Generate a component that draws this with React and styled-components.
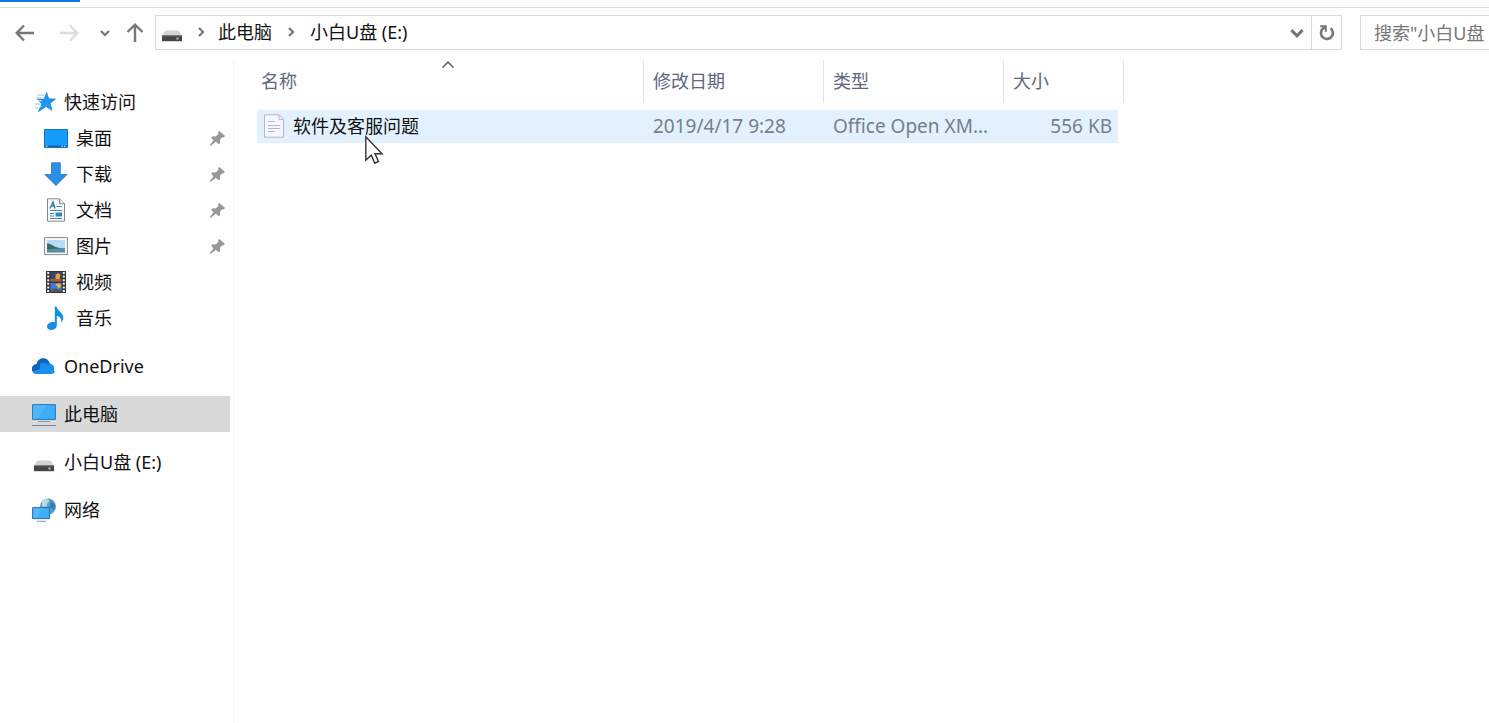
import React from "react";
import styled, { createGlobalStyle } from "styled-components";

const GlobalStyle = createGlobalStyle`
  * {
    box-sizing: border-box;
  }

  body {
    margin: 0;
    background: #fefefe;
    color: #111111;
    font-family: "Noto Sans", "Noto Sans CJK SC", sans-serif;
    font-size: 18px;
    line-height: 24px;
  }

  svg {
    display: block;
    flex-shrink: 0;
  }
`;

const Window = styled.div`
  display: flex;
  flex-direction: column;
  min-height: 100vh;
  overflow: hidden;
`;

const TabStrip = styled.div`
  height: 8px;
  border-bottom: 1px solid #dcdcdc;
`;

const ActiveTab = styled.div`
  width: 80px;
  height: 2px;
  background: #0f78e6;
`;

const Toolbar = styled.div`
  display: flex;
  align-items: center;
  padding: 7px 0 10px 12px;
`;

const History = styled.div`
  display: flex;
  gap: 10px;
`;

const IconButton = styled.button`
  display: flex;
  align-items: center;
  justify-content: center;
  width: ${(props) => props.$width}px;
  height: 33px;
  padding: 0;
  border: 0;
  border-left: ${(props) => (props.$divided ? "1px solid #d9d9d9" : "0")};
  background: none;
  color: ${(props) => (props.disabled ? "#dcdcdc" : "#777777")};
`;

const AddressBar = styled.div`
  display: flex;
  flex: 1;
  align-items: center;
  height: 35px;
  margin: 0 18px 0 5px;
  padding-left: 4px;
  border: 1px solid #d9d9d9;
`;

const Breadcrumb = styled.div`
  display: flex;
  flex: 1;
  align-items: center;
  padding-bottom: 2px;
  color: #777777;
`;

const Crumb = styled.a`
  color: #111111;
  text-decoration: none;
  white-space: nowrap;
`;

const CrumbArrow = styled.span`
  display: flex;
  justify-content: center;
  width: ${(props) => (props.$wide ? 38 : 34)}px;
`;

const Search = styled.input`
  width: 129px;
  height: 35px;
  padding: 0 0 0 13px;
  border: 1px solid #d9d9d9;
  border-right: 0;
  background: none;
  font: inherit;

  &::placeholder {
    color: #777777;
    opacity: 1;
  }
`;

const Main = styled.div`
  display: flex;
  flex: 1;
`;

const Sidebar = styled.nav`
  width: 234px;
  padding: 24px 3px 0 0;
  border-right: 1px solid #f5f5f5;
`;

const Group = styled.div`
  margin-bottom: 12px;
`;

const Item = styled.a`
  display: flex;
  align-items: center;
  gap: 8px;
  height: 36px;
  padding: 0 4px 0 ${(props) => (props.$nested ? 44 : 32)}px;
  background: ${(props) => (props.$selected ? "#d9d9d9" : "none")};
  color: #111111;
  text-decoration: none;
`;

const ItemName = styled.span`
  flex: 1;
`;

const Content = styled.main`
  flex: 1;
  padding-left: 23px;
`;

const Table = styled.table`
  width: 867px;
  table-layout: fixed;
  border-spacing: 0;
`;

const HeadCell = styled.th`
  position: relative;
  width: ${(props) => props.$width}px;
  height: 43px;
  padding: 0 0 2px ${(props) => (props.$first ? 4 : 9)}px;
  border-right: 1px solid #e4e4e4;
  color: #5d6880;
  font-weight: normal;
  text-align: left;
`;

const SortArrow = styled.span`
  position: absolute;
  top: -2px;
  right: 188px;
`;

const Spacer = styled.tr`
  height: 7px;
`;

const Cell = styled.td`
  height: 33px;
  padding: 0 8px 2px 9px;
  background: #e3f1fe;
  color: #757f8a;
  font-size: 19px;
  overflow: hidden;
  white-space: nowrap;
`;

const NameCell = styled(Cell)`
  padding-left: 5px;
  color: #111111;
  font-size: 18px;
`;

const SizeCell = styled(Cell)`
  padding-right: 6px;
  border-right: 6px solid #fefefe;
  text-align: right;
`;

const FileName = styled.div`
  display: flex;
  align-items: center;
  gap: 7px;
`;

const Pointer = styled.div`
  position: absolute;
  top: 135px;
  left: 364px;
  pointer-events: none;
`;

function Arrow({ rotate = 0 }) {
  return (
    <svg width="24" height="24" viewBox="0 0 24 24" fill="none" stroke="currentColor" strokeWidth="2.4">
      <path d="M21 12H4M11 4.5 3.7 12l7.3 7.5" transform={`rotate(${rotate} 12 12)`} />
    </svg>
  );
}

function Chevron({ size = 10, rotate = 0, weight = 2.2 }) {
  return (
    <svg width={size} height={size} viewBox="0 0 10 10" fill="none" stroke="currentColor" strokeWidth={weight}>
      <path d="M1 3l4 4 4-4" transform={`rotate(${rotate} 5 5)`} />
    </svg>
  );
}

function Refresh() {
  return (
    <svg width="18" height="18" viewBox="0 0 18 18" fill="none" stroke="currentColor" strokeWidth="2.6">
      <path d="M12.6 4.2A6 6 0 1 1 4 5.5L7 3" />
      <path d="M2.2 2.2h5.6v5.6" strokeWidth="2" />
    </svg>
  );
}

function DriveIcon() {
  return (
    <svg width="24" height="24" viewBox="0 0 24 24">
      <path d="M5.5 10.5h13l3.5 5H2z" fill="#d3d3d3" />
      <path d="M2 15h20v6.2H2z" fill="#454545" />
      <path d="M2 15h20v1.2H2z" fill="#7d7d7d" />
      <path d="M16.5 17.5h2v2h-2z" fill="#8fe6a0" />
    </svg>
  );
}

function StarIcon() {
  return (
    <svg width="24" height="24" viewBox="0 0 24 24">
      <path
        d="M14.6 2.5l2.2 6.3 6.6.3-5.2 4.3 1.8 6.9-5.9-3.7-7.6 5 3.2-7.8L5.4 9.2l6.9-.2z"
        fill="#2196ee"
        stroke="#1b7bc9"
        strokeWidth=".7"
      />
      <path d="M5.5 5h6.5M4 8h5.5M3 14h5M3 18h3.5" stroke="#8cc5f0" strokeWidth="1.1" />
      <path d="M3.5 10.8h6M3.5 16.2h6" stroke="#ffffff" strokeWidth=".9" />
    </svg>
  );
}

function DesktopIcon() {
  return (
    <svg width="24" height="24" viewBox="0 0 24 24">
      <path d="M.5 3.5h23v18H.5z" fill="#159cff" stroke="#1672bd" />
      <path d="M1 19.5h22V21H1z" fill="#1562a4" />
      <path d="M2 20.3h1.5m14 0H19m1 0h1.5" stroke="#e3f3ff" />
    </svg>
  );
}

function DownloadIcon() {
  return (
    <svg width="24" height="24" viewBox="0 0 24 24">
      <path d="M7.5.8h8.8v11.7h6.8L12 23.5.8 12.5h6.7z" fill="#2b8ee9" stroke="#2775bd" strokeWidth=".8" />
    </svg>
  );
}

function DocumentIcon() {
  return (
    <svg width="24" height="24" viewBox="0 0 24 24" fill="none">
      <path d="M3.5.8h12l5 5v17.4h-17z" fill="#fbfbfb" stroke="#888888" />
      <path d="M15.5.8v5h5" fill="#e3e3e3" stroke="#888888" />
      <path d="M6 10.5 9 4l2 6.5M7 8h4" stroke="#2c82a8" strokeWidth="1.4" />
      <path d="M12.5 8.5H18M6 12.5h12M6 15.5h4M6 18h4M6 20.5h12" stroke="#368eb5" strokeWidth="1.2" />
      <path d="M11.5 14.5H18v4h-6.5z" fill="#2d86cb" />
    </svg>
  );
}

function PictureIcon() {
  return (
    <svg width="24" height="24" viewBox="0 0 24 24">
      <path d="M.6 3.6h22.8v17H.6z" fill="#fafafa" stroke="#8b8b8b" />
      <path d="M3 6h18v12.5H3z" fill="#b5dcf5" />
      <path d="M3 9.5c4 0 5 2 9 3.5s6 1.5 9 1.5v1.5H3z" fill="#3d6b66" />
      <path d="M3 15.5c6-1 12-1 18-1v4H3z" fill="#588ba9" />
    </svg>
  );
}

function VideoIcon() {
  return (
    <svg width="24" height="24" viewBox="0 0 24 24">
      <path d="M2 1h20v22H2z" fill="#363636" />
      <path d="M6.5 2h11v9.5h-11z" fill="#324673" />
      <path d="M11.5 4.5l3-1.5 2 2-1 4h-4z" fill="#e7a22f" />
      <path d="M6.5 9h11v2.5h-11z" fill="#b55c31" />
      <path d="M6.5 13h11v9h-11z" fill="#3d7de0" />
      <path d="M11.5 14l4-1 2 3-3 2.5z" fill="#e9b246" />
      <path d="M6.5 20l4-1.5 7 2V22h-11z" fill="#5b5148" />
      <path d="M4.2 2v20M19.8 2v20" stroke="#f1f1f1" strokeWidth="2" strokeDasharray="2 1.6" />
    </svg>
  );
}

function MusicIcon() {
  return (
    <svg width="24" height="24" viewBox="0 0 24 24">
      <path
        d="M10.8.5h1.7c.5 4 6.8 6 6.8 11 0 2-.8 3.8-2 5.2.5-4-1.3-6-4.4-7v9.1c0 3-2.3 5.2-5.4 5.2-2.7 0-4.5-1.4-4.5-3.4 0-2.6 3-4.6 6-4.6.8 0 1.4.1 1.8.3z"
        fill="#168fe3"
      />
    </svg>
  );
}

function CloudIcon() {
  return (
    <svg width="24" height="24" viewBox="0 0 24 24">
      <path d="M5 20a5 5 0 0 1-.5-10C6 3 15.5 2 18 9.5L13 16z" fill="#0d63c1" />
      <path d="M8 9.5c3-1.5 6 1 10 0a5.4 5.4 0 0 1 0 10.5L8 17z" fill="#168ce2" />
      <path d="M1 17.5 14.5 12l8.5 5.5c-.8 1.7-2.3 2.5-4.3 2.5H5c-1.9 0-3.2-1-4-2.5z" fill="#1b8ff0" />
    </svg>
  );
}

function ComputerIcon() {
  return (
    <svg width="24" height="24" viewBox="0 0 24 24">
      <path d="M.6 2.6h22.8v14.8H.6z" fill="#3eadfa" stroke="#2876b5" />
      <path d="M1.2 3.2h13L5 16.8H1.2z" fill="#52b6fb" />
      <path d="M6 19.5h12" stroke="#8b98a2" />
      <path d="M0 23.5h24" stroke="#75869a" />
    </svg>
  );
}

function NetworkIcon() {
  return (
    <svg width="24" height="24" viewBox="0 0 24 24">
      <circle cx="16" cy="8.5" r="8" fill="#5c9fc8" />
      <path d="M10 3c3-3 7-2 7 0s-3 2-2 4-3 2-5 1z" fill="#bcd9e5" />
      <path d="M19 3l4 4-1 5-4-3z" fill="#2f7db3" />
      <path d="M.6 9.6h17v11H.6z" fill="#40aff8" stroke="#236fa9" />
      <path d="M1.2 10.2h9L5 20H1.2z" fill="#52b6fb" />
      <path d="M5 23.3h9" stroke="#8b98a2" />
    </svg>
  );
}

function PinIcon() {
  return (
    <svg width="17" height="17" viewBox="0 0 17 17" fill="#96999d">
      <path d="M10.5 1l5.5 5-1.6 1.5-1-.2-2.5 2.5.4 3.2-1.5 1.3-2.9-2.6L1.5 16l-.8-.8 3.8-5-2.3-2.4 1.3-1.5 3.3.2L9.5 3.7 9 2.3z" />
    </svg>
  );
}

function FileIcon() {
  return (
    <svg width="24" height="24" viewBox="0 0 24 24" fill="none" stroke="#b3b7c9">
      <path d="M2.5.8h14.6l4.4 4.5v17.9h-19z" fill="#f5f7fc" />
      <path d="M17 .8v4.6h4.5" />
      <path d="M6 7.5h7M6 11.5h12M6 14.5h12M6 17.5h7" />
    </svg>
  );
}

function PointerIcon() {
  return (
    <svg width="20" height="30" viewBox="0 0 20 30">
      <path
        d="M1.8 1.8v23.4l5.4-5 3.6 8 3.7-1.7-3.5-7.8h7z"
        fill="#ffffff"
        stroke="#333333"
        strokeWidth="1.4"
      />
    </svg>
  );
}

const quickItems = [
  { name: "桌面", Icon: DesktopIcon, pinned: true },
  { name: "下载", Icon: DownloadIcon, pinned: true },
  { name: "文档", Icon: DocumentIcon, pinned: true },
  { name: "图片", Icon: PictureIcon, pinned: true },
  { name: "视频", Icon: VideoIcon },
  { name: "音乐", Icon: MusicIcon },
];

const places = [
  { name: "OneDrive", Icon: CloudIcon },
  { name: "此电脑", Icon: ComputerIcon, selected: true },
  { name: "小白U盘 (E:)", Icon: DriveIcon },
  { name: "网络", Icon: NetworkIcon },
];

function App() {
  return (
    <Window>
      <GlobalStyle />
      <TabStrip>
        <ActiveTab />
      </TabStrip>
      <Toolbar>
        <History>
          <IconButton $width={26} aria-label="后退">
            <Arrow />
          </IconButton>
          <IconButton $width={42} aria-label="前进" disabled>
            <Arrow rotate={180} />
          </IconButton>
          <IconButton $width={10} aria-label="最近浏览的位置">
            <Chevron />
          </IconButton>
          <IconButton $width={30} aria-label="上移">
            <Arrow rotate={90} />
          </IconButton>
        </History>
        <AddressBar>
          <Breadcrumb>
            <DriveIcon />
            <CrumbArrow>
              <Chevron rotate={-90} />
            </CrumbArrow>
            <Crumb href="#">此电脑</Crumb>
            <CrumbArrow $wide>
              <Chevron rotate={-90} />
            </CrumbArrow>
            <Crumb href="#">小白U盘 (E:)</Crumb>
          </Breadcrumb>
          <IconButton $width={28} aria-label="以前的位置">
            <Chevron size={14} />
          </IconButton>
          <IconButton $width={30} $divided aria-label="刷新">
            <Refresh />
          </IconButton>
        </AddressBar>
        <Search type="text" aria-label="搜索" placeholder={'搜索"小白U盘'} />
      </Toolbar>
      <Main>
        <Sidebar>
          <Group>
            <Item href="#">
              <StarIcon />
              <ItemName>快速访问</ItemName>
            </Item>
            {quickItems.map(({ name, Icon, pinned }) => (
              <Item href="#" $nested key={name}>
                <Icon />
                <ItemName>{name}</ItemName>
                {pinned && <PinIcon />}
              </Item>
            ))}
          </Group>
          {places.map(({ name, Icon, selected }) => (
            <Group key={name}>
              <Item href="#" $selected={selected}>
                <Icon />
                <ItemName>{name}</ItemName>
              </Item>
            </Group>
          ))}
        </Sidebar>
        <Content>
          <Table>
            <thead>
              <tr>
                <HeadCell $width={387} $first>
                  名称
                  <SortArrow>
                    <Chevron size={14} rotate={180} weight={1.1} />
                  </SortArrow>
                </HeadCell>
                <HeadCell $width={180}>修改日期</HeadCell>
                <HeadCell $width={180}>类型</HeadCell>
                <HeadCell $width={120}>大小</HeadCell>
              </tr>
            </thead>
            <tbody>
              <Spacer />
              <tr>
                <NameCell>
                  <FileName>
                    <FileIcon />
                    软件及客服问题
                  </FileName>
                </NameCell>
                <Cell>2019/4/17 9:28</Cell>
                <Cell>Office Open XM...</Cell>
                <SizeCell>556 KB</SizeCell>
              </tr>
            </tbody>
          </Table>
        </Content>
      </Main>
      <Pointer>
        <PointerIcon />
      </Pointer>
    </Window>
  );
}

export default App;
